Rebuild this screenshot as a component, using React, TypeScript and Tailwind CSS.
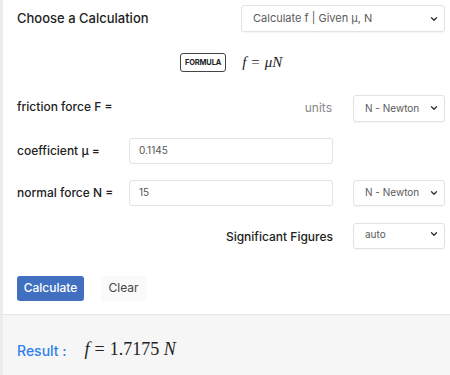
import React from "react";
import { ChevronDown } from "lucide-react";

const font = { fontFamily: "Inter, 'Noto Sans', sans-serif" };
const math = "font-['Liberation_Serif',serif]";

// small select with the dark chevron on the right
const Select = ({
  value,
  className,
  small = false,
}: {
  value: string;
  className: string;
  small?: boolean;
}) => (
  <div
    className={`relative flex items-center border border-[#e2e2e2] rounded-[3px] bg-white shadow-[0_1px_1px_rgba(0,0,0,0.04)] ${className}`}>
    <span
      className={`pl-[11px] text-[#5a5a5a] ${small ? "text-[10px]" : "text-[11px]"}`}>
      {value}
    </span>
    <ChevronDown
      className="absolute right-[5px] text-[#333]"
      size={10}
      strokeWidth={3.2}
    />
  </div>
);

const Input = ({ value }: { value: string }) => (
  <div className="flex items-center h-[26px] w-[204px] border border-[#e2e2e2] rounded-[3px] bg-white pl-[9px] text-[10px] text-[#555]">
    {value}
  </div>
);

export default function App() {
  return (
    <div
      className="w-[450px] h-[375px] flex flex-col bg-white border-l-[3px] border-[#ececec] text-[#222] overflow-hidden"
      style={font}>
      {/* choose calculation */}
      <div className="flex items-center justify-between pt-[5px] pl-[14px] pr-[5px]">
        <span className="text-[13px] font-medium">Choose a Calculation</span>
        <Select value="Calculate f | Given μ, N" className="w-[204px] h-[27px]" />
      </div>

      {/* formula */}
      <div className="flex items-center pl-[177px] mt-[19px] gap-[16px]">
        <span className="border border-[#444] rounded-[3px] px-[4px] py-[2px] text-[7.5px] font-bold leading-[13px] tracking-tight">
          FORMULA
        </span>
        <span className={`${math} italic text-[15px]`}>
          f<span className="not-italic mx-[5px]">=</span>μN
        </span>
      </div>

      {/* inputs */}
      <div className="grid grid-cols-[92px_204px_92px] gap-x-[20px] gap-y-[16px] pl-[14px] mt-[21px] items-center">
        <span className="text-[12px] font-medium -mt-[3px] whitespace-nowrap">friction force F =</span>
        <span className="text-[12px] text-[#888] text-right pr-[1px]">units</span>
        <Select value="N - Newton" className="h-[27px]" small />

        <span className="text-[12px] font-medium whitespace-nowrap">coefficient μ =</span>
        <Input value="0.1145" />
        <span />

        <span className="text-[12px] font-medium whitespace-nowrap">normal force N =</span>
        <Input value="15" />
        <Select value="N - Newton" className="h-[26px]" small />

        <span />
        <span className="text-[12px] font-medium text-right mt-[4px]">Significant Figures</span>
        <Select value="auto" className="h-[26px] mt-[1px] pb-[3px]" small />
      </div>

      {/* buttons */}
      <div className="flex items-center gap-[17px] pl-[14px] mt-[27px]">
        <button className="h-[25px] w-[67px] rounded-[3px] bg-[#4170c0] text-white text-[12px] font-medium">
          Calculate
        </button>
        <button className="h-[25px] w-[45px] bg-[#fafafa] text-[#444] text-[12px]">
          Clear
        </button>
      </div>

      {/* result */}
      <div className="flex-1 mt-[13px] border-t border-[#e6e6e6] bg-[#f6f6f6] flex items-start pl-[14px] pt-[25px] gap-[18px]">
        <span className="text-[14px] font-medium text-[#2f80ed]">Result :</span>
        <span className={`${math} italic text-[18px] leading-[22px] -mt-[2px]`}>
          f<span className="not-italic mx-[5px]">=</span>
          <span className="not-italic">1.7175</span> N
        </span>
      </div>
    </div>
  );
}
